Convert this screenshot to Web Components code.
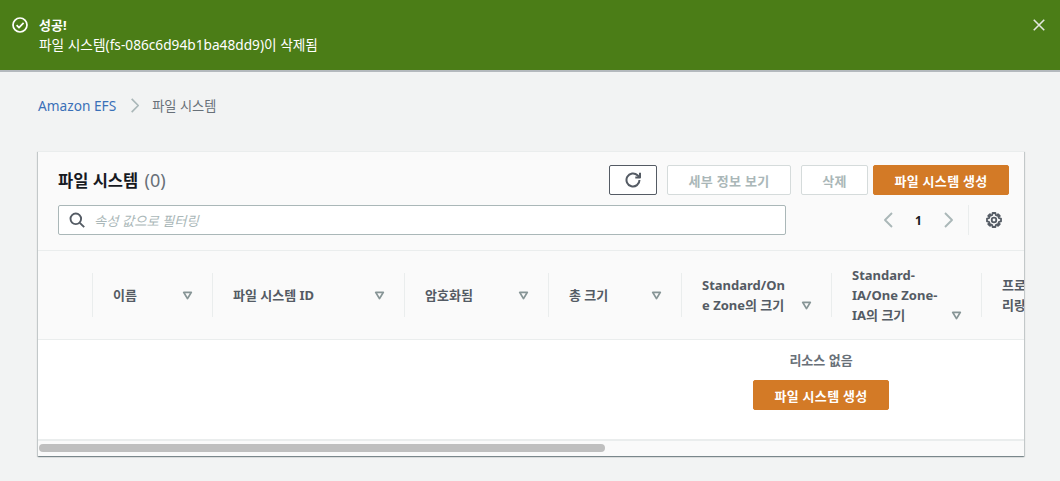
<!DOCTYPE html>
<html lang="ko">
<head>
<meta charset="utf-8">
<title>파일 시스템</title>
<style>
  html, body { margin: 0; height: 100%; }
  body {
    background: #f2f3f3;
    color: #16191f;
    font-family: "Noto Sans", "Noto Sans CJK KR", sans-serif;
    font-size: 13px;
    overflow: hidden;
  }
</style>
</head>
<body>
<x-app></x-app>
<script>
const ICONS = {
  check: '<circle cx="8" cy="8" r="7"/><path d="M4.6 8.2l2.4 2.4 4.6-4.8"/>',
  close: '<path d="M2 2l12 12M14 2L2 14"/>',
  refresh: '<path d="M14.5 8a6.5 6.5 0 1 1-2-4.7l2 1.9"/><path d="M15 .8v4.7h-4.7"/>',
  search: '<circle cx="6.8" cy="6.8" r="5.3"/><path d="M10.8 10.8l4.4 4.4"/>',
  left: '<path d="M11 1L4 8l7 7"/>',
  right: '<path d="M5 1l7 7-7 7"/>',
  gear: '<path d="M6.6 1H9.4L9.8 3 11.3 3.6 12 2.2 13.8 4 12.4 4.7 13 6.2 15 6.6V9.4L13 9.8 12.4 11.3 13.8 12 12 13.8 11.3 12.4 9.8 13 9.4 15H6.6L6.2 13 4.7 12.4 4 13.8 2.2 12 3.6 11.3 3 9.8 1 9.4V6.6L3 6.2 3.6 4.7 2.2 4 4 2.2 4.7 3.6 6.2 3Z"/><circle cx="8" cy="8" r="2.3"/>',
  caret: '<path d="M2.5 3.5h11L8 12.5Z"/>',
};

class Icon extends HTMLElement {
  connectedCallback() {
    const size = this.getAttribute('size') || 16;
    const width = this.getAttribute('stroke') || 2;
    const root = this.attachShadow({mode: 'open'});
    root.innerHTML = `
      <style>
        :host { display: inline-flex; flex: none; width: ${size}px; height: ${size}px; }
        svg { width: 100%; height: 100%; fill: none; stroke: currentColor; stroke-width: ${width}; stroke-linejoin: round; }
      </style>
      <svg viewBox="0 0 16 16">${ICONS[this.getAttribute('name')]}</svg>
    `;
  }
}

class Flash extends HTMLElement {
  constructor() {
    super();
    this.attachShadow({mode: 'open'}).innerHTML = `
      <style>
        :host {
          display: flex;
          box-sizing: border-box;
          height: 72px;
          padding: 15px 14px 0 12px;
          background: #4b7d17;
          border-bottom: 2px solid #b4b9bd;
          background-clip: padding-box;
          color: #fff;
          font-size: 13.7px;
          line-height: 20px;
        }
        x-icon { margin-top: 2px; }
        .text { flex: 1; margin-left: 11px; }
        .head { font-weight: 700; font-size: 13px; }
        .close { color: #e4e8e0; margin-top: 3px; }
      </style>
      <x-icon name="check" size="16" stroke="1.7"></x-icon>
      <div class="text"><div class="head"><slot name="head"></slot></div><div><slot></slot></div></div>
      <x-icon class="close" name="close" size="14" stroke="1.8"></x-icon>
    `;
  }
}

class Breadcrumb extends HTMLElement {
  constructor() {
    super();
    this.attachShadow({mode: 'open'}).innerHTML = `
      <style>
        :host {
          display: flex;
          align-items: center;
          height: 20px;
          padding: 23px 0 36px 38px;
          font-size: 13.2px;
          color: #687078;
        }
        .link { color: #3a70b8; font-size: 13.7px; }
        x-icon { margin: 0 10px 0 11px; color: #aab7b8; }
      </style>
      <span class="link">Amazon EFS</span>
      <x-icon name="right" size="15" stroke="1.8"></x-icon>
      <span>파일 시스템</span>
    `;
  }
}

class Btn extends HTMLElement {
  constructor() {
    super();
    this.attachShadow({mode: 'open'}).innerHTML = `
      <style>
        :host {
          display: inline-flex;
          align-items: center;
          justify-content: center;
          box-sizing: border-box;
          height: 30px;
          border: 1px solid #d5dbdb;
          border-radius: 2px;
          background: #fff;
          color: #aab7b8;
          font-size: 13px;
          font-weight: 700;
          letter-spacing: .3px;
        }
        :host([variant=primary]) { background: #d37a26; border-color: #d37a26; color: #fff; }
        :host([variant=focus]) { border-color: #545b64; color: #545b64; }
      </style>
      <slot></slot>
    `;
  }
}

class Th extends HTMLElement {
  constructor() {
    super();
    this.attachShadow({mode: 'open'}).innerHTML = `
      <style>
        :host {
          display: flex;
          align-items: center;
          box-sizing: border-box;
          height: 44px;
          padding-left: 20px;
          border-left: 1px solid #eaeded;
          font-size: 13px;
          font-weight: 700;
          line-height: 20px;
          color: #545b64;
        }
        .in { display: flex; align-items: flex-end; flex: 1; min-width: 0; }
        .label { flex: 1; min-width: 0; padding-right: 9px; overflow-wrap: anywhere; }
        .caret { display: flex; align-items: center; height: 20px; color: #879596; margin-right: 19px; }
      </style>
      <div class="in">
        <div class="label"><slot></slot></div>
        <div class="caret"><x-icon name="caret" size="11" stroke="2.6"></x-icon></div>
      </div>
    `;
  }
}

class FileTable extends HTMLElement {
  constructor() {
    super();
    this.attachShadow({mode: 'open'}).innerHTML = `
      <style>
        :host {
          display: block;
          width: 986px;
          background: #fafafa;
          border-top: 1px solid #eaeded;
          box-shadow: 0 1px 1px 0 rgba(0,28,36,.3), 1px 1px 1px 0 rgba(0,28,36,.15), -1px 1px 1px 0 rgba(0,28,36,.15);
        }
        .head { padding: 13px 15px 15px 20px; border-bottom: 1px solid #eaeded; }
        .row { display: flex; align-items: center; height: 30px; }
        .row + .row { margin-top: 10px; }
        h2 { flex: 1; margin: 0; font-size: 16.5px; font-weight: 700; line-height: 31px; height: 30px; }
        h2 span { color: #687078; font-weight: 400; font-size: 18px; line-height: 1; margin-left: 2px; }
        x-btn + x-btn { margin-left: 10px; }
        x-btn.last { margin-left: 5px; }
        .filter {
          display: flex;
          align-items: center;
          box-sizing: border-box;
          width: 728px;
          height: 30px;
          padding-left: 10px;
          background: #fff;
          border: 1px solid #aab7b8;
          border-radius: 2px;
          color: #545b64;
        }
        .filter span { margin-left: 9px; color: #aab7b8; font-size: 13.3px; font-style: italic; }
        .pager { display: flex; align-items: center; margin-left: auto; }
        .pager .prev, .pager .next { color: #aab7b8; }
        .pager b { width: 43px; text-align: center; font-size: 12px; }
        .pager .sep { width: 1px; height: 30px; margin: 0 17px 0 12px; background: #eaeded; }
        .pager .gear { color: #545b64; margin-right: 7px; }
        .scroll { overflow: hidden; }
        .inner { width: 1566px; }
        .cols {
          display: grid;
          grid-template-columns: 54px 120px 192px 144px 133px 150px 150px 150px;
          align-items: center;
          height: 88px;
          background: #fafafa;
          border-bottom: 1px solid #eaeded;
        }
        .empty {
          display: flex;
          flex-direction: column;
          align-items: center;
          height: 99px;
          background: #fff;
          color: #687078;
          font-weight: 700;
          font-size: 13px;
        }
        .empty p { margin: 0; padding-top: 10px; line-height: 20px; height: 30px; }
        .empty x-btn { width: 136px; }
        .track { height: 17px; box-sizing: border-box; border-top: 2px solid #eaeded; padding: 3px 0 0 1px; background: #fafafa; }
        .thumb { width: 566px; height: 8px; background: #bfbfbf; border-radius: 4px; }
      </style>
      <div class="head">
        <div class="row">
          <h2>파일 시스템 <span>(0)</span></h2>
          <x-btn variant="focus" style="width:48px"><x-icon name="refresh" size="16"></x-icon></x-btn>
          <x-btn style="width:124px">세부 정보 보기</x-btn>
          <x-btn style="width:67px">삭제</x-btn>
          <x-btn class="last" variant="primary" style="width:136px">파일 시스템 생성</x-btn>
        </div>
        <div class="row">
          <div class="filter"><x-icon name="search" size="16" stroke="1.9"></x-icon><span>속성 값으로 필터링</span></div>
          <div class="pager">
            <x-icon class="prev" name="left" size="16" stroke="1.9"></x-icon>
            <b>1</b>
            <x-icon class="next" name="right" size="16" stroke="1.9"></x-icon>
            <span class="sep"></span>
            <x-icon class="gear" name="gear" size="16" stroke="1.8"></x-icon>
          </div>
        </div>
      </div>
      <div class="scroll">
        <div class="inner">
          <div class="cols">
            <span></span>
            <x-th>이름</x-th>
            <x-th>파일 시스템 ID</x-th>
            <x-th>암호화됨</x-th>
            <x-th>총 크기</x-th>
            <x-th>Standard/One Zone의 크기</x-th>
            <x-th>Standard-IA/One Zone-IA의 크기</x-th>
            <x-th>프로비저닝된 처리량 (MiB/s)</x-th>
          </div>
          <div class="empty">
            <p>리소스 없음</p>
            <x-btn variant="primary">파일 시스템 생성</x-btn>
          </div>
          <div class="track"><div class="thumb"></div></div>
        </div>
      </div>
    `;
  }
}

class App extends HTMLElement {
  constructor() {
    super();
    this.attachShadow({mode: 'open'}).innerHTML = `
      <style>
        :host { display: block; }
        x-table { margin-left: 38px; }
      </style>
      <x-flash><span slot="head">성공!</span>파일 시스템(fs-086c6d94b1ba48dd9)이 삭제됨</x-flash>
      <x-breadcrumb></x-breadcrumb>
      <x-table></x-table>
    `;
  }
}

customElements.define('x-icon', Icon);
customElements.define('x-flash', Flash);
customElements.define('x-breadcrumb', Breadcrumb);
customElements.define('x-btn', Btn);
customElements.define('x-th', Th);
customElements.define('x-table', FileTable);
customElements.define('x-app', App);
</script>
</body>
</html>
